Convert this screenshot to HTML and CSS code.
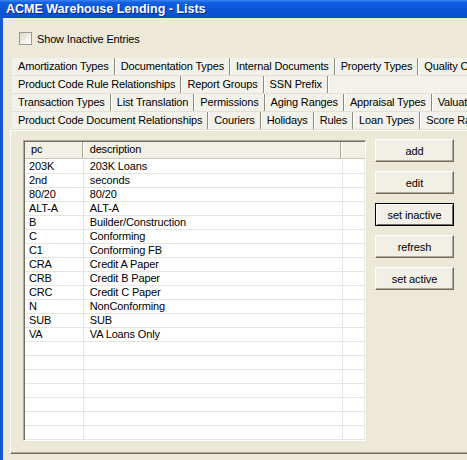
FILE: index.html
```html
<!DOCTYPE html>
<html>
<head>
<meta charset="utf-8">
<title>ACME Warehouse Lending - Lists</title>
<link rel="stylesheet" href="styles.css">
</head>
<body>
<div class="window">
  <div class="titlebar"><span class="title">ACME Warehouse Lending - Lists</span></div>
  <div class="frame">
    <label class="check"><span class="box"></span><span class="check-label">Show Inactive Entries</span></label>
    <div class="tabs">
      <div class="tabrow">
        <span class="tab">Amortization Types</span>
        <span class="tab">Documentation Types</span>
        <span class="tab">Internal Documents</span>
        <span class="tab">Property Types</span>
        <span class="tab">Quality Control</span>
      </div>
      <div class="tabrow">
        <span class="tab">Product Code Rule Relationships</span>
        <span class="tab">Report Groups</span>
        <span class="tab">SSN Prefix</span>
      </div>
      <div class="tabrow">
        <span class="tab">Transaction Types</span>
        <span class="tab">List Translation</span>
        <span class="tab">Permissions</span>
        <span class="tab">Aging Ranges</span>
        <span class="tab">Appraisal Types</span>
        <span class="tab">Valuation</span>
      </div>
      <div class="tabrow">
        <span class="tab">Product Code Document Relationships</span>
        <span class="tab">Couriers</span>
        <span class="tab">Holidays</span>
        <span class="tab">Rules</span>
        <span class="tab active">Loan Types</span>
        <span class="tab">Score Ranges</span>
      </div>
    </div>
    <div class="panel">
      <div class="list">
        <div class="lhead">
          <span class="c1">pc</span><span class="c2">description</span><span class="c3"></span>
        </div>
        <div class="row"><span class="c1">203K</span><span class="c2">203K Loans</span><span class="c3"></span></div>
        <div class="row"><span class="c1">2nd</span><span class="c2">seconds</span><span class="c3"></span></div>
        <div class="row"><span class="c1">80/20</span><span class="c2">80/20</span><span class="c3"></span></div>
        <div class="row"><span class="c1">ALT-A</span><span class="c2">ALT-A</span><span class="c3"></span></div>
        <div class="row"><span class="c1">B</span><span class="c2">Builder/Construction</span><span class="c3"></span></div>
        <div class="row"><span class="c1">C</span><span class="c2">Conforming</span><span class="c3"></span></div>
        <div class="row"><span class="c1">C1</span><span class="c2">Conforming FB</span><span class="c3"></span></div>
        <div class="row"><span class="c1">CRA</span><span class="c2">Credit A Paper</span><span class="c3"></span></div>
        <div class="row"><span class="c1">CRB</span><span class="c2">Credit B Paper</span><span class="c3"></span></div>
        <div class="row"><span class="c1">CRC</span><span class="c2">Credit C Paper</span><span class="c3"></span></div>
        <div class="row"><span class="c1">N</span><span class="c2">NonConforming</span><span class="c3"></span></div>
        <div class="row"><span class="c1">SUB</span><span class="c2">SUB</span><span class="c3"></span></div>
        <div class="row"><span class="c1">VA</span><span class="c2">VA Loans Only</span><span class="c3"></span></div>
        <div class="row"><span class="c1"></span><span class="c2"></span><span class="c3"></span></div>
        <div class="row"><span class="c1"></span><span class="c2"></span><span class="c3"></span></div>
        <div class="row"><span class="c1"></span><span class="c2"></span><span class="c3"></span></div>
        <div class="row"><span class="c1"></span><span class="c2"></span><span class="c3"></span></div>
        <div class="row"><span class="c1"></span><span class="c2"></span><span class="c3"></span></div>
        <div class="row"><span class="c1"></span><span class="c2"></span><span class="c3"></span></div>
        <div class="row"><span class="c1"></span><span class="c2"></span><span class="c3"></span></div>
        <div class="row"><span class="c1"></span><span class="c2"></span><span class="c3"></span></div>
      </div>
      <div class="buttons">
        <button class="btn">add</button>
        <button class="btn">edit</button>
        <button class="btn default">set inactive</button>
        <button class="btn">refresh</button>
        <button class="btn">set active</button>
      </div>
    </div>
  </div>
</div>
</body>
</html>
```

FILE: styles.css
```css
html, body {
  margin: 0;
  padding: 0;
  background: #ece9d8;
}

.window {
  width: 467px;
  height: 460px;
  display: flex;
  flex-direction: column;
  overflow: hidden;
  background: #ece9d8;
  font-family: "Liberation Sans", Arial, sans-serif;
  font-size: 11px;
  letter-spacing: -0.15px;
  color: #000;
}

.titlebar {
  height: 18px;
  flex: none;
  background: linear-gradient(#3d84f5 0%, #0f5fe0 15%, #0955d8 50%, #0a50d0 100%);
  display: flex;
  align-items: center;
  padding-left: 6px;
}

.title {
  color: #fff;
  font-weight: bold;
  font-size: 12.5px;
  text-shadow: 1px 1px 0 #0a2a8a;
  letter-spacing: 0;
}

.frame {
  flex: 1;
  border-left: 3px solid #1757d2;
  display: flex;
  flex-direction: column;
  min-height: 0;
}

.check {
  display: flex;
  align-items: center;
  margin: 14px 0 0 16px;
  height: 13px;
}

.box {
  width: 11px;
  height: 11px;
  border: 1px solid #9a9a94;
  background: linear-gradient(135deg, #d8d7cf 0%, #f2f1ea 60%, #ffffff 100%);
}

.check-label {
  margin-left: 5px;
}

.tabs {
  margin: 13px 0 0 9px;
  display: flex;
  flex-direction: column;
}

.tabrow {
  height: 18px;
  display: flex;
  white-space: nowrap;
  overflow: hidden;
  background: #f3f2ea;
  border-bottom: 1px solid #e2e0d4;
  box-sizing: border-box;
}

.tab {
  height: 17px;
  line-height: 17px;
  padding: 0 5px 0 5px;
  border-right: 1px solid #8d8b80;
  box-shadow: 1px 0 0 #ffffff;
  margin-right: 1px;
  flex: none;
}

.tabrow .tab:first-child {
  padding-left: 6px;
}

.panel {
  margin: 0 0 0 7px;
  height: 324px;
  box-sizing: border-box;
  border-top: 1px solid #ffffff;
  border-left: 1px solid #ffffff;
  border-bottom: 1px solid #716f64;
  box-shadow: inset 0 -1px 0 #aca899;
  display: flex;
  padding: 9px 0 0 12px;
}

.list {
  width: 343px;
  height: 301px;
  box-sizing: border-box;
  background: #fff;
  border-top: 1px solid #aca899;
  border-left: 1px solid #aca899;
  border-right: 1px solid #fff;
  border-bottom: 1px solid #fff;
  box-shadow: inset 1px 1px 0 #716f64, inset -1px -1px 0 #f1efe2;
  overflow: hidden;
  padding: 1px 0 0 1px;
}

.lhead {
  height: 17px;
  display: flex;
  background: #f1efe6;
  border-bottom: 1px solid #c9c7ba;
  box-sizing: border-box;
}

.lhead span {
  line-height: 15px;
  box-sizing: border-box;
  border-right: 1px solid #aca899;
  box-shadow: 1px 0 0 #fff;
  margin-right: 1px;
}

.lhead .c1 { width: 58px; padding-left: 6px; }
.lhead .c2 { width: 259px; padding-left: 6px; }
.lhead .c3 { width: 22px; border-right: none; box-shadow: none; }

.row {
  height: 14px;
  display: flex;
  border-bottom: 1px solid #e6e5df;
  box-sizing: border-box;
}

.row:nth-child(2) {
  margin-top: 1px;
}

.row span {
  line-height: 13px;
  box-sizing: border-box;
  border-right: 1px solid #e6e5df;
  white-space: nowrap;
}

.row .c1 { width: 59px; padding-left: 4px; }
.row .c2 { width: 260px; padding-left: 6px; }
.row .c3 { width: 22px; border-right: none; }

.buttons {
  display: flex;
  flex-direction: column;
  gap: 9px;
  margin: -1px 0 0 9px;
}

.btn {
  width: 79px;
  height: 23px;
  box-sizing: border-box;
  font-family: "Liberation Sans", Arial, sans-serif;
  font-size: 11px;
  letter-spacing: -0.1px;
  color: #000;
  background: #f1efe6;
  border: 1px solid;
  border-color: #ffffff #716f64 #716f64 #ffffff;
  box-shadow: inset -1px -1px 0 #aca899;
  padding: 0;
  margin: 0;
}

.btn.default {
  border: 1px solid #000;
  box-shadow: inset 1px 1px 0 #fff, inset -1px -1px 0 #716f64;
}
```
